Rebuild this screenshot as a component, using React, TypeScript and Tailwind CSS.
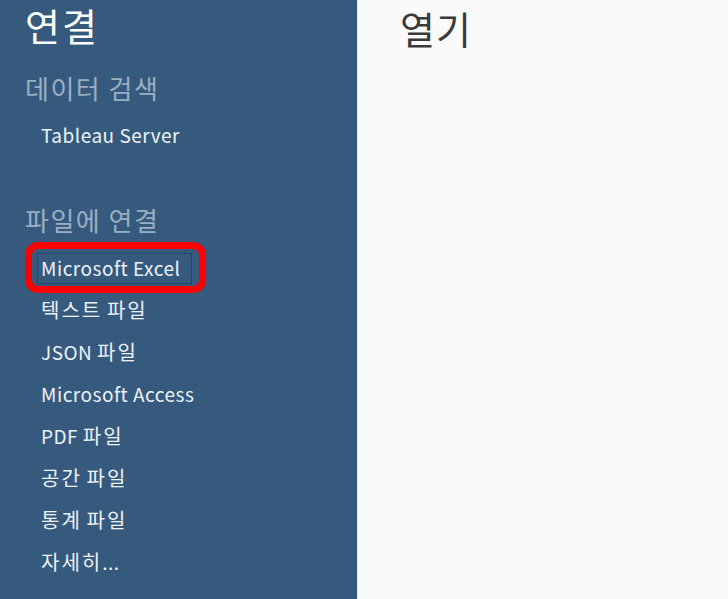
import React from "react";

const font = { fontFamily: '"Noto Sans CJK KR", "Noto Sans", sans-serif' };

const fileItems = [
  "텍스트 파일",
  "JSON 파일",
  "Microsoft Access",
  "PDF 파일",
  "공간 파일",
  "통계 파일",
  "자세히...",
];

// korean runs are set a bit larger / wider than latin, like the original UI font
const Label = ({ text }: { text: string }) => {
  const parts = text.split(/([가-힣]+)/).filter((p) => p !== "");
  return (
    <>
      {parts.map((p, i) =>
        /[가-힣]/.test(p) ? (
          <span key={i} className="text-[20px] tracking-[2px]">
            {p}
          </span>
        ) : (
          <span key={i} className="text-[19px] tracking-[0.5px]">
            {p}
          </span>
        )
      )}
    </>
  );
};

const App = () => {
  return (
    <div className="flex w-[728px] h-[599px] overflow-hidden bg-[#fafafa]" style={font}>
      <div className="w-[357px] h-full bg-[#355a7e] pl-[25px] flex flex-col shrink-0">
        <p className="h-[50px] leading-[50px] text-[38px] tracking-[2px] text-white">연결</p>
        <p className="mt-[18px] h-[40px] leading-[40px] text-[26px] tracking-[1.5px] text-[#9aaec2]">
          데이터 검색
        </p>
        <p className="mt-[6px] h-[42px] leading-[42px] pl-[16px] text-[#eef2f6]">
          <Label text="Tableau Server" />
        </p>
        <p className="mt-[44px] h-[40px] leading-[40px] text-[26px] tracking-[1.5px] text-[#9aaec2]">
          파일에 연결
        </p>
        <div className="mt-[7px] h-[42px] pl-[12px] flex items-center">
          <div className="relative w-[155px] h-[31px] border border-[#24466a] pl-[3px] flex items-center text-[#eef2f6]">
            <Label text="Microsoft Excel" />
            <span className="absolute left-[-13px] top-[-12px] w-[181px] h-[51px] border-[7px] border-[#ff0000] rounded-[13px]" />
          </div>
        </div>
        {fileItems.map((item) => (
          <p key={item} className="h-[42px] leading-[42px] pl-[16px] text-[#eef2f6]">
            <Label text={item} />
          </p>
        ))}
      </div>
      <div className="flex-1 border-l border-[#e4e6ea] pl-[42px]">
        <p className="h-[56px] leading-[56px] text-[38px] tracking-[1px] text-[#3a3a3a]">열기</p>
      </div>
    </div>
  );
};

export default App;
